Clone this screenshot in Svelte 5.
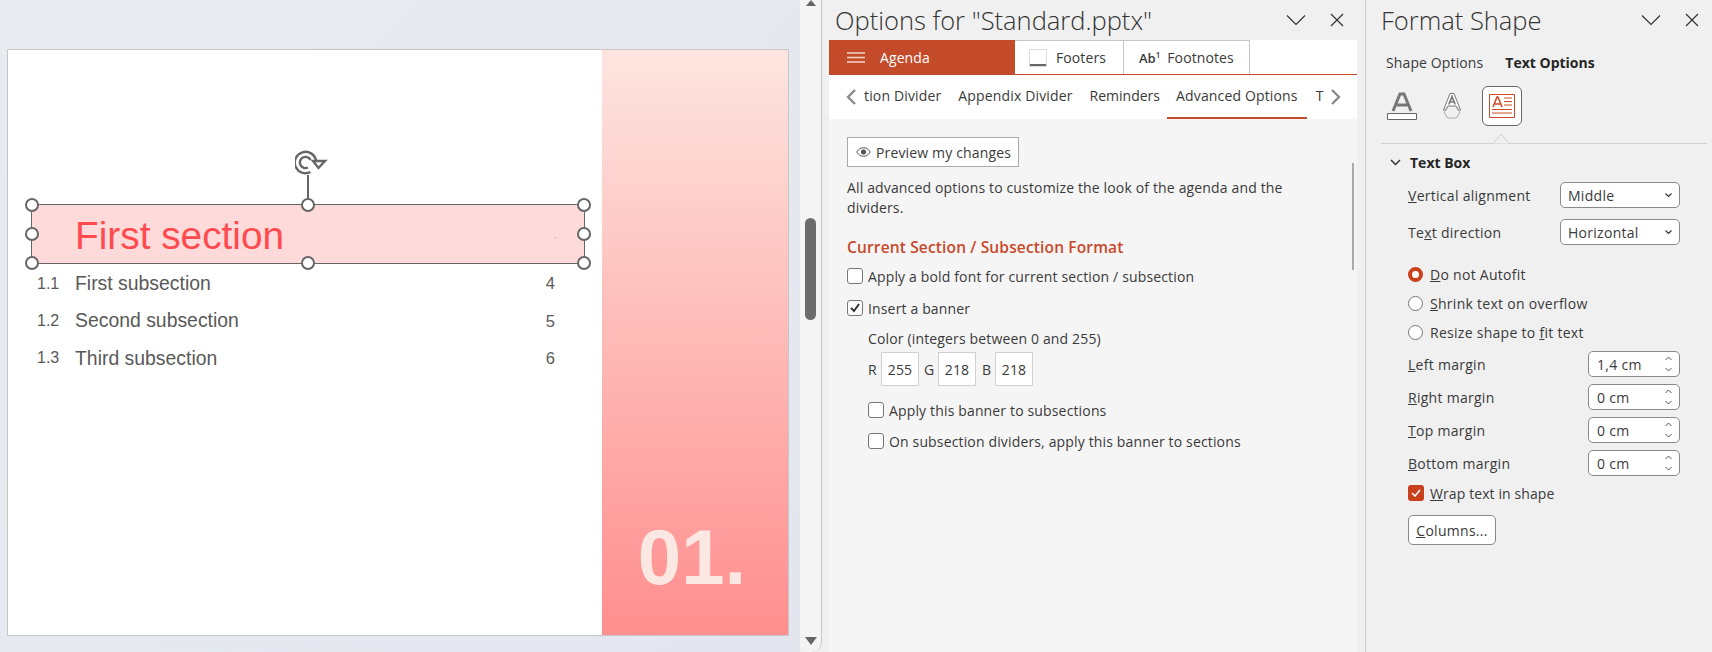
<script>
  const subs = [
    ['1.1', 'First subsection', '4'],
    ['1.2', 'Second subsection', '5'],
    ['1.3', 'Third subsection', '6']
  ];
  const handles = [
    [0, 0], [50, 0], [100, 0],
    [0, 50], [100, 50],
    [0, 100], [50, 100], [100, 100]
  ];
  const margins = [
    ['L', 'eft margin', '1,4 cm'],
    ['R', 'ight margin', '0 cm'],
    ['T', 'op margin', '0 cm'],
    ['B', 'ottom margin', '0 cm']
  ];
</script>

<div class="app">
  <section class="canvas">
    <div class="slide">
      <div class="slide-main">
        <div class="banner">
          <span class="banner-text">First section</span>
          <i class="dot"></i>
          <svg class="rotate" width="33" height="26" viewBox="0 0 33 26" fill="none" stroke="#666" stroke-width="2.400">
            <path d="M15.500 22A10.700 10.700 0 1 1 21 10.500" />
            <path d="M13 17.500A5.600 5.600 0 1 1 15.500 10" />
            <path d="M18 11h12l-6.500 7z" fill="#fff" />
          </svg>
          <i class="stem"></i>
          {#each handles as h}
            <i class="handle" style="left:{h[0]}%;top:{h[1]}%"></i>
          {/each}
        </div>
        {#each subs as s}
          <div class="sub">
            <span class="num">{s[0]}</span>
            <span class="name">{s[1]}</span>
            <span class="page">{s[2]}</span>
          </div>
        {/each}
      </div>
      <div class="band"><span>01.</span></div>
    </div>
  </section>

  <div class="vscroll">
    <svg class="arrow-up" width="12" height="6" viewBox="0 0 12 6"><path d="M6 0l5 6H1z" fill="#666" /></svg>
    <div class="thumb"></div>
    <svg class="arrow-down" width="12" height="8" viewBox="0 0 12 8"><path d="M0 0h12l-6 8z" fill="#666" /></svg>
  </div>

  <section class="options">
    <header class="pane-head">
      <h1>Options for "Standard.pptx"</h1>
      <svg class="chev" width="20" height="12" viewBox="0 0 20 12" fill="none" stroke="#333" stroke-width="1.200"><path d="M1 1.500l9 9 9-9" /></svg>
      <svg class="close" width="14" height="14" viewBox="0 0 14 14" fill="none" stroke="#333" stroke-width="1.200"><path d="M1 1l12 12M13 1L1 13" /></svg>
    </header>
    <div class="opt-body">
      <div class="tabs">
        <div class="tab agenda">
          <svg width="18" height="11" viewBox="0 0 18 11" stroke="#f4d6cc" stroke-width="1.500"><path d="M0 1h18M0 5.500h18M0 10h18" /></svg>
          <span>Agenda</span>
        </div>
        <div class="tab footers">
          <svg width="18" height="18" viewBox="0 0 18 18" fill="none"><path d="M.5.500h17v17H.5z" stroke="#ddd" /><path d="M1 15h16v2H1z" fill="#666" /></svg>
          <span>Footers</span>
        </div>
        <div class="tab footnotes">
          <b class="ab">Ab<sup>1</sup></b>
          <span>Footnotes</span>
        </div>
      </div>
      <div class="subtabs">
        <svg class="sc l" width="12" height="18" viewBox="0 0 12 18" fill="none" stroke="#8a8a8a" stroke-width="2.400"><path d="M10 2L3 9l7 7" /></svg>
        <span class="st s1">tion Divider</span>
        <span class="st s2">Appendix Divider</span>
        <span class="st s3">Reminders</span>
        <span class="st s4 active">Advanced Options</span>
        <span class="st s5">T</span>
        <svg class="sc r" width="12" height="18" viewBox="0 0 12 18" fill="none" stroke="#8a8a8a" stroke-width="2.400"><path d="M2 2l7 7-7 7" /></svg>
      </div>
      <div class="content">
        <div class="thin-scroll"></div>
        <button class="preview">
          <svg width="15" height="10" viewBox="0 0 15 10" fill="none" stroke="#555"><path d="M.7 5C3 1.700 5 .7 7.500.7S12 1.700 14.300 5C12 8.300 10 9.300 7.500 9.300S3 8.300.7 5z" /><circle cx="7.500" cy="5" r="2.200" fill="#555" /></svg>
          <span>Preview my changes</span>
        </button>
        <p class="intro">All advanced options to customize the look of the agenda and the dividers.</p>
        <h2>Current Section / Subsection Format</h2>
        <label class="cb-row r1"><i class="cb"></i>Apply a bold font for current section / subsection</label>
        <label class="cb-row r2">
          <i class="cb"><svg width="12" height="10" viewBox="0 0 12 10" fill="none" stroke="#333" stroke-width="2"><path d="M2 5l3 3 5-7" /></svg></i>
          Insert a banner
        </label>
        <div class="nest color-label">Color (integers between 0 and 255)</div>
        <div class="nest rgb">
          <span class="l">R</span><span class="box">255</span>
          <span class="l g">G</span><span class="box">218</span>
          <span class="l b">B</span><span class="box">218</span>
        </div>
        <label class="cb-row nest r3"><i class="cb"></i>Apply this banner to subsections</label>
        <label class="cb-row nest r4"><i class="cb"></i>On subsection dividers, apply this banner to sections</label>
      </div>
    </div>
  </section>

  <section class="format">
    <header class="pane-head">
      <h1>Format Shape</h1>
      <svg class="chev" width="20" height="12" viewBox="0 0 20 12" fill="none" stroke="#333" stroke-width="1.200"><path d="M1 1.500l9 9 9-9" /></svg>
      <svg class="close" width="14" height="14" viewBox="0 0 14 14" fill="none" stroke="#333" stroke-width="1.200"><path d="M1 1l12 12M13 1L1 13" /></svg>
    </header>
    <div class="fmt-tabs"><span>Shape Options</span><b>Text Options</b></div>
    <div class="fmt-icons">
      <svg class="ic1" width="30" height="28" viewBox="0 0 30 28" fill="none">
        <path d="M6 19L13 2h4l7 17M9 13h12" stroke="#777" stroke-width="3" />
        <path d="M.5 21.500h29v6H.5z" stroke="#666" fill="#fff" />
      </svg>
      <svg class="ic2" width="20" height="28" viewBox="0 0 20 28" fill="none" stroke="#777">
        <path d="M1.500 18L8 1.500h4L18.500 18H16l-2-4H6l-2 4z" fill="#fff" />
        <path d="M6.800 12.500L10 4.500l3.200 8M8 10h4" stroke="#777" stroke-width="1.600" />
        <path d="M5.500 14l-3.500 6 3.500 6h9l3.500-6-3.500-6" stroke="#aaa" />
      </svg>
      <div class="ic3">
        <svg width="26" height="24" viewBox="0 0 26 24" fill="none" stroke="#cf4b28">
          <path d="M.5.500h25v23H.5z" />
          <path d="M4 13L8 3h1l4 10M5.500 10h6" stroke-width="1.600" />
          <path d="M15 4h8M15 7.500h8M15 11h8M3 15.500h20M3 19h20" />
        </svg>
      </div>
    </div>
    <div class="divider"><svg width="18" height="11" viewBox="0 0 18 11" fill="none"><path d="M0 10.500h1L9 1l8 9.500h1" stroke="#cfcfcf" fill="#f0f0f0" /></svg></div>
    <div class="tb-head">
      <svg width="11" height="7" viewBox="0 0 11 7" fill="none" stroke="#333" stroke-width="1.500"><path d="M1 1l4.500 4.500L10 1" /></svg>
      <b>Text Box</b>
    </div>
    <div class="fm-row first">
      <span><u>V</u>ertical alignment</span>
      <div class="select"><span>Middle</span><svg width="7" height="5" viewBox="0 0 7 5" fill="none" stroke="#333" stroke-width="1.200"><path d="M.5.500l3 3 3-3" /></svg></div>
    </div>
    <div class="fm-row second">
      <span>Te<u>x</u>t direction</span>
      <div class="select"><span>Horizontal</span><svg width="7" height="5" viewBox="0 0 7 5" fill="none" stroke="#333" stroke-width="1.200"><path d="M.5.500l3 3 3-3" /></svg></div>
    </div>
    <div class="radios">
      <label><i class="radio on"></i><span><u>D</u>o not Autofit</span></label>
      <label><i class="radio"></i><span><u>S</u>hrink text on overflow</span></label>
      <label><i class="radio"></i><span>Resize shape to <u>f</u>it text</span></label>
    </div>
    <div class="margins">
      {#each margins as m}
        <div class="m-row">
          <span><u>{m[0]}</u>{m[1]}</span>
          <div class="spin">
            <span>{m[2]}</span>
            <svg width="7" height="16" viewBox="0 0 7 16" fill="none" stroke="#555"><path d="M.5 4l3-3 3 3M.5 12l3 3 3-3" /></svg>
          </div>
        </div>
      {/each}
    </div>
    <label class="wrap"><i class="cb-on"><svg width="10" height="8" viewBox="0 0 10 8" fill="none" stroke="#fff" stroke-width="1.600"><path d="M1 4l3 3 5-6" /></svg></i><span><u>W</u>rap text in shape</span></label>
    <button class="columns"><u>C</u>olumns...</button>
  </section>
</div>

<style>
  :global(body) { margin: 0; }
  * { box-sizing: border-box; }
  i { display: block; font-style: normal; }
  .app {
    display: flex; width: 1712px; height: 652px; overflow: hidden;
    font-family: "Open Sans", "Noto Sans", sans-serif; font-size: 14px; letter-spacing: .15px; color: #3a3a3a;
    background: #f0f0f0;
  }

  /* canvas */
  .canvas { width: 800px; flex: none; padding: 49px 0 0 7px; background: linear-gradient(135deg, #e8ecf0, #e3e6ef); }
  .slide { display: flex; width: 782px; height: 587px; background: #fff; border: 1px solid #c6c6c6; font-family: "Liberation Sans", Arial, sans-serif; color: #595959; letter-spacing: 0; }
  .slide-main { flex: none; width: 594px; padding: 154px 0 0 23px; }
  .banner { position: relative; width: 554px; height: 60px; margin-bottom: 1px; background: #ffdada; border: 1px solid #666; padding: 4px 0 0 43px; display: flex; align-items: center; }
  .banner-text { font-size: 38.8px; color: #ff4b50; line-height: 1; }
  .dot { position: absolute; left: 523px; top: 32px; width: 1px; height: 1px; background: #999; }
  .stem { position: absolute; left: calc(50% - 1px); top: -30px; width: 1.500px; height: 30px; background: #666; }
  .rotate { position: absolute; left: 263px; top: -55px; }
  .handle { position: absolute; width: 14px; height: 14px; margin: -7px 0 0 -7px; border-radius: 50%; background: #fff; border: 2.500px solid #666; }
  .sub { display: grid; grid-template-columns: 6px 38px 1fr auto; height: 37.300px; align-items: center; width: 524px; line-height: 1; }
  .sub .num { grid-column: 2; font-size: 16px; }
  .sub .name { grid-column: 3; font-size: 19.400px; }
  .sub .page { grid-column: 4; font-size: 16.500px; }
  .band { flex: 1; display: flex; align-items: flex-end; justify-content: center; padding: 0 6px 49px 0; background: linear-gradient(180deg, #fde5e0, #ff8e8e); }
  .band span { font-size: 78px; font-weight: 700; color: #fce8e3; line-height: 58px; }

  /* outer scrollbar */
  .vscroll { position: relative; flex: none; width: 22px; height: 652px; padding-left: 5px; background: #f4f4f4; border-right: 1px solid #c8c8c8; border-radius: 0 0 10px 10px; }
  .arrow-up { position: absolute; left: 5px; top: 0; }
  .arrow-down { position: absolute; left: 5px; bottom: 7px; }
  .thumb { margin-top: 218px; width: 11px; height: 102px; border-radius: 6px; background: #6c6c6c; }

  /* panes */
  .pane-head { display: flex; align-items: center; height: 40px; }
  .pane-head h1 { margin: 0; flex: 1; font-weight: 300; font-size: 25.500px; letter-spacing: 0; color: #333; white-space: nowrap; line-height: 40px; }
  .close { margin-left: 24px; }

  .options { flex: none; width: 544px; background: #f0f0f0; border-right: 1px solid #cdcdcd; padding-left: 7px; }
  .options .pane-head { padding: 0 21px 0 6px; }
  .opt-body { width: 528px; }
  .tabs { display: flex; height: 35px; background: #fff; border-bottom: 1.500px solid #c44b2a; letter-spacing: .1px; }
  .tab { display: flex; align-items: center; height: 34px; }
  .agenda { width: 186px; padding-left: 18px; gap: 15px; background: #c44b2a; color: #fff; }
  .footers { width: 109px; padding-left: 14px; gap: 9px; border-right: 1px solid #c6c6c6; border-top: 1px solid #c6c6c6; }
  .footnotes { width: 126px; padding-left: 15px; gap: 7px; border-right: 1px solid #c6c6c6; border-top: 1px solid #c6c6c6; }
  .ab { font-size: 13px; font-weight: 600; letter-spacing: 0; }
  .ab sup { font-size: 8px; line-height: 0; }
  .subtabs { display: flex; align-items: center; height: 44px; background: #fff; padding-left: 16px; overflow: hidden; }
  .sc.l { margin-right: 7px; }
  .st { white-space: nowrap; height: 44px; line-height: 42px; }
  .s2, .s3 { margin-left: 17px; }
  .s3 { letter-spacing: 0; }
  .s4 { margin-left: 7px; padding: 0 9px; border-bottom: 2px solid #c44b2a; }
  .s5 { margin-left: 9px; }
  .sc.r { margin-left: 6px; }
  .content { position: relative; height: 533px; background: #f5f5f5; padding: 18px 0 0 18px; }
  .thin-scroll { position: absolute; left: 523px; top: 44px; width: 2px; height: 107px; background: #aaa; }
  .preview { display: flex; align-items: center; gap: 5px; width: 172px; height: 30px; padding: 0 0 0 8px; margin: 0; border: 1px solid #aaa; background: #fff; font: inherit; letter-spacing: inherit; color: inherit; white-space: nowrap; }
  .intro { margin: 11px 0 0; width: 450px; line-height: 20px; }
  h2 { margin: 17px 0 0; font-size: 15.500px; font-weight: 600; color: #c8492a; line-height: 24px; white-space: nowrap; }
  .cb-row { display: flex; align-items: center; gap: 5px; height: 16px; white-space: nowrap; }
  .cb { display: flex; align-items: center; justify-content: center; width: 16px; height: 16px; border: 1px solid #777; border-radius: 3px; background: #fff; flex: none; }
  .r1 { margin-top: 9px; }
  .r2 { margin-top: 16px; }
  .nest { margin-left: 21px; }
  .color-label { margin-top: 14px; line-height: 18px; }
  .rgb { display: flex; align-items: center; margin-top: 4px; }
  .rgb .l { width: 13px; }
  .rgb .l.g { width: 14px; margin-left: 5px; }
  .rgb .l.b { width: 13px; margin-left: 6px; }
  .box { display: flex; align-items: center; justify-content: center; width: 38px; height: 34px; background: #fff; border: 1px solid #d0d0d0; }
  .r3 { margin-top: 16px; }
  .r4 { margin-top: 15px; }

  .format { flex: 1; background: #f0f0f0; padding-left: 15px; letter-spacing: .28px; }
  .format .pane-head { padding-right: 13px; }
  .fmt-tabs { display: flex; gap: 22px; height: 28px; margin-top: 9px; padding-left: 5px; line-height: 28px; letter-spacing: .12px; }
  .fmt-tabs b { font-weight: 700; color: #262626; letter-spacing: 0; }
  .fmt-icons { display: flex; align-items: flex-start; margin-top: 9px; height: 40px; padding-left: 6px; }
  .ic1 { margin-top: 6px; }
  .ic2 { margin: 6px 0 0 25px; }
  .ic3 { display: flex; align-items: center; justify-content: center; width: 40px; height: 40px; margin-left: 20px; background: #fff; border: 1px solid #666; border-radius: 6px; }
  .divider { position: relative; width: 326px; height: 1px; margin-top: 17px; background: #cfcfcf; }
  .divider svg { position: absolute; left: 111px; top: -10px; }
  .tb-head { display: flex; align-items: center; gap: 9px; height: 20px; margin-top: 8px; padding-left: 9px; }
  .tb-head b { font-weight: 700; color: #262626; letter-spacing: 0; }
  .fm-row { display: flex; align-items: center; justify-content: space-between; width: 272px; height: 26px; margin-left: 27px; white-space: nowrap; }
  .fm-row.first { margin-top: 10px; }
  .fm-row.second { margin-top: 11px; }
  .select { display: flex; align-items: center; justify-content: space-between; width: 120px; height: 26px; padding: 0 7px; background: #fff; border: 1px solid #888; border-radius: 5px; }
  .radios { display: flex; flex-direction: column; gap: 13px; margin: 21px 0 0 27px; }
  .radios label { display: flex; align-items: center; gap: 7px; height: 16px; white-space: nowrap; }
  .radio { width: 15px; height: 15px; border-radius: 50%; background: #fff; border: 1px solid #777; }
  .radio.on { border: 4px solid #c8401c; }
  .margins { display: flex; flex-direction: column; gap: 7px; width: 272px; margin: 11px 0 0 27px; }
  .m-row { display: flex; align-items: center; justify-content: space-between; height: 26px; }
  .spin { display: flex; align-items: center; justify-content: space-between; width: 92px; height: 26px; padding: 0 7px 0 8px; background: #fff; border: 1px solid #888; border-radius: 5px; }
  .wrap { display: flex; align-items: center; gap: 6px; height: 16px; margin: 9px 0 0 27px; letter-spacing: .1px; }
  .cb-on { display: flex; align-items: center; justify-content: center; width: 16px; height: 16px; border-radius: 3px; background: #c8401c; }
  .columns { display: block; width: 88px; height: 30px; margin: 14px 0 0 27px; padding: 0; background: #fff; border: 1px solid #888; border-radius: 5px; font: inherit; letter-spacing: inherit; color: inherit; }
</style>
